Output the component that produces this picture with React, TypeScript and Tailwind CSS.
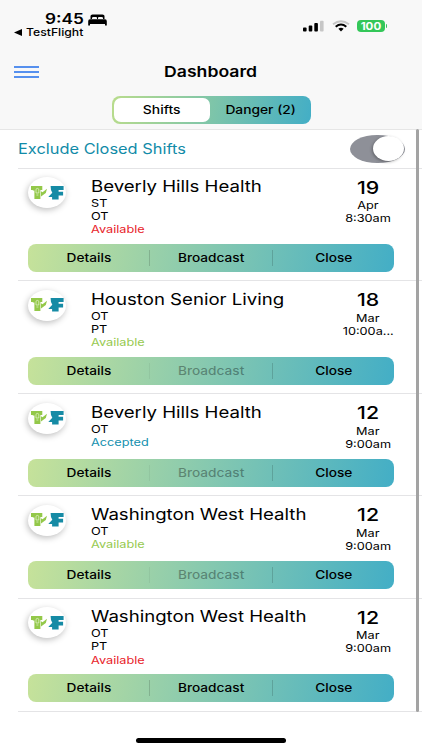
import type { ReactNode } from "react";
import clsx from "clsx";

type Shift = {
  facility: string;
  roles: string[];
  status: "Available" | "Accepted";
  statusClass: string;
  day: string;
  month: string;
  time: string;
  canBroadcast: boolean;
};

const SHIFTS: Shift[] = [
  {
    facility: "Beverly Hills Health",
    roles: ["ST", "OT"],
    status: "Available",
    statusClass: "text-[#e8222a]",
    day: "19",
    month: "Apr",
    time: "8:30am",
    canBroadcast: true,
  },
  {
    facility: "Houston Senior Living",
    roles: ["OT", "PT"],
    status: "Available",
    statusClass: "text-[#96c94f]",
    day: "18",
    month: "Mar",
    time: "10:00a...",
    canBroadcast: false,
  },
  {
    facility: "Beverly Hills Health",
    roles: ["OT"],
    status: "Accepted",
    statusClass: "text-[#128fae]",
    day: "12",
    month: "Mar",
    time: "9:00am",
    canBroadcast: false,
  },
  {
    facility: "Washington West Health",
    roles: ["OT"],
    status: "Available",
    statusClass: "text-[#96c94f]",
    day: "12",
    month: "Mar",
    time: "9:00am",
    canBroadcast: false,
  },
  {
    facility: "Washington West Health",
    roles: ["OT", "PT"],
    status: "Available",
    statusClass: "text-[#e8222a]",
    day: "12",
    month: "Mar",
    time: "9:00am",
    canBroadcast: true,
  },
];

// Wide lettering: glyphs are stretched horizontally only
function Wide({ children, className }: { children: ReactNode; className?: string }) {
  return (
    <span className={clsx("inline-block whitespace-nowrap", className)}>
      {children}
    </span>
  );
}

function Logo() {
  return (
    <div className="flex h-[31px] w-[38px] items-center justify-center rounded-[50%] bg-white shadow-[-1px_2px_6px_rgba(0,0,0,0.25)]">
      <svg width="33" height="16" viewBox="0 0 33 16">
        <path d="M0 1h11.300v4H9.400V14H3.400V5.600H1.800V5H0z" fill="#93c849" />
        <path d="M10 6.200l1.500 1L16 3.800 14.800 8l-4.800 3.500z" fill="#93c849" />
        <path d="M5 8V4.800Q5 3.400 6.400 3.400T7.800 4.800V8zM5.400 10h2" fill="none" stroke="#e9f5d8" strokeWidth="0.700" />
        <path d="M19.600 1H32.600v4h-5v1.800h4.500v3.800h-4.500V14.500h-6.500V12H17.300l4-4.300L20 5z" fill="#168ba5" />
      </svg>
    </div>
  );
}

function StatusBar() {
  return (
    <div className="flex h-[42px] justify-between pt-[12px]">
      <div className="pl-[14px]">
        <div className="flex h-[14px] items-center pl-[31px]">
          <Wide className="w-[43px] origin-left scale-x-[1.19] text-[14.500px] leading-[14px] font-semibold">
            9:45
          </Wide>
          <svg width="19" height="12" viewBox="0 0 19 12" className="mt-[2px]">
            <path d="M2.500 5V2Q2.500 .5 4.500 .5h10q2 0 2 1.500v3h-1.500V4q0-1-1.500-1h-2.500q-1 0-1 1v1h-1V4q0-1-1-1H5.500Q4 3 4 4v1z" />
            <path d="M2 5.200h15q1.800 0 1.800 2V11.500h-1.800V10H2v1.500H.2V7.200q0-2 1.800-2z" />
          </svg>
        </div>
        <div className="mt-[1px] flex h-[10px] items-center gap-[4px]">
          <svg width="8" height="7" viewBox="0 0 8 7">
            <path d="M0 3.500 8 0v7z" />
          </svg>
          <Wide className="origin-left scale-x-[1.22] text-[10px] leading-[10px] font-medium">
            TestFlight
          </Wide>
        </div>
      </div>
      <div className="mt-[8px] flex h-[12px] items-center pr-[35px]">
        <svg width="21" height="12" viewBox="0 0 21 12">
          <rect x="0" y="7.500" width="3.600" height="4" rx="0.900" />
          <rect x="5.700" y="5.500" width="3.600" height="6" rx="0.900" />
          <rect x="11.300" y="3" width="3.600" height="8.500" rx="0.900" />
          <rect x="17" y="0.800" width="3.600" height="10.700" rx="0.900" fill="#c6c6c6" />
        </svg>
        <svg width="18" height="12" viewBox="0 0 18 12" fill="none" className="ml-[8px]">
          <path d="M1 4.300Q9-2 17 4.300" stroke="#c6c6c6" strokeWidth="1.900" />
          <path d="M3.700 6.700Q9 2.300 14.300 6.700" stroke="#000" strokeWidth="2" />
          <path d="M6.400 8.800Q9 6.800 11.600 8.800L9 11.600z" fill="#000" />
        </svg>
        <div className="ml-[7px] flex h-[12px] w-[27.500px] items-center justify-center rounded-[4px] bg-[#34c759]">
          <Wide className="scale-x-[1.15] text-[10px] leading-[12px] font-bold text-white">
            100
          </Wide>
        </div>
        <div className="ml-[1px] h-[4px] w-[1.500px] rounded-r-full bg-[#34c759]" />
      </div>
    </div>
  );
}

function ShiftRow({ shift }: { shift: Shift }) {
  return (
    <div className="border-b border-[#e4e4e6] pb-[8.200px] pl-[10.500px]">
      <div className="flex justify-between">
        <div className="flex pt-[8.500px]">
          <Logo />
          <div className="ml-[25px] flex flex-col items-start text-[10.600px] leading-[13.200px]">
            <Wide className="origin-left scale-x-[1.178] text-[15.800px] leading-[20px]">
              {shift.facility}
            </Wide>
            {shift.roles.map((role) => (
              <Wide key={role} className="origin-left scale-x-[1.2]">
                {role}
              </Wide>
            ))}
            <Wide className={clsx("origin-left scale-x-[1.2]", shift.statusClass)}>
              {shift.status}
            </Wide>
          </div>
        </div>
        <div className="mr-[24px] flex w-[60px] flex-col items-center pt-[8px] pb-[0.700px] text-[10.600px] leading-[13.200px]">
          <Wide className="scale-x-[1.22] text-[17.500px] leading-[22.300px] font-[450]">
            {shift.day}
          </Wide>
          <Wide className="scale-x-[1.2]">{shift.month}</Wide>
          <Wide className="scale-x-[1.2]">{shift.time}</Wide>
        </div>
      </div>

      {/* Actions */}
      <div className="mt-[7.600px] flex h-[28px] w-[366px] items-center rounded-[8px] bg-linear-[100deg,#c6e29a,#43aec6] text-[11.600px] font-[450]">
        <button className="flex-1 pt-[1px]">
          <Wide className="scale-x-[1.18]">Details</Wide>
        </button>
        <div className={clsx("h-[16px] w-px", shift.canBroadcast ? "bg-black/15" : "bg-black/5")} />
        <button className={clsx("flex-1 pt-[1px]", !shift.canBroadcast && "text-black/35")}>
          <Wide className="scale-x-[1.18]">Broadcast</Wide>
        </button>
        <div className="h-[16px] w-px bg-black/15" />
        <button className="flex-1 pt-[1px]">
          <Wide className="scale-x-[1.18]">Close</Wide>
        </button>
      </div>
    </div>
  );
}

export default function App() {
  return (
    <div className="relative flex h-[750px] w-[422px] flex-col overflow-hidden bg-white font-['Inter',sans-serif] text-black">
      <header className="h-[130px] border-b border-[#e6e6e6] bg-[#f8f8f8]">
        <StatusBar />
        <div className="grid h-[54px] grid-cols-3 items-center pt-[6px]">
          <button className="ml-[14px] flex w-[25px] flex-col gap-[3px]">
            <span className="h-[2px] bg-[#5690ee]" />
            <span className="h-[2px] bg-[#5690ee]" />
            <span className="h-[2px] bg-[#5690ee]" />
          </button>
          <h1 className="text-center text-[15px] font-semibold">
            <Wide className="scale-x-[1.175]">Dashboard</Wide>
          </h1>
        </div>
        <div className="mx-auto flex h-[28px] w-[199px] rounded-[8px] bg-linear-[100deg,#b9dc8c,#43aec6] p-[2px] text-[11.600px] font-[450]">
          <button className="w-[96px] rounded-[7px] bg-white pt-[1px]">
            <Wide className="scale-x-[1.2]">Shifts</Wide>
          </button>
          <button className="flex-1 pt-[1px] pl-[4px]">
            <Wide className="scale-x-[1.19]">Danger (2)</Wide>
          </button>
        </div>
      </header>

      <main className="ml-[17.500px]">
        <div className="flex h-[38.500px] items-center justify-between border-b border-[#e4e4e6] pr-[17px]">
          <Wide className="origin-left scale-x-[1.155] text-[14.200px] text-[#128ba8]">
            Exclude Closed Shifts
          </Wide>
          <div className="flex h-[28px] w-[55px] justify-end rounded-[27px/14px] bg-[#8e9098] p-[1.500px]">
            <div className="h-[25px] w-[31px] rounded-[50%] bg-white shadow-[-1px_1px_3px_rgba(0,0,0,0.3)]" />
          </div>
        </div>
        {SHIFTS.map((shift, i) => (
          <ShiftRow key={i} shift={shift} />
        ))}
      </main>

      {/* Scroll indicator */}
      <div className="absolute top-[129px] right-[3px] h-[583px] w-[3px] rounded-full bg-[#a3a3a3]" />

      {/* Home indicator */}
      <div className="mx-auto mt-auto mb-[7.500px] h-[4.500px] w-[150px] rounded-full bg-black" />
    </div>
  );
}
